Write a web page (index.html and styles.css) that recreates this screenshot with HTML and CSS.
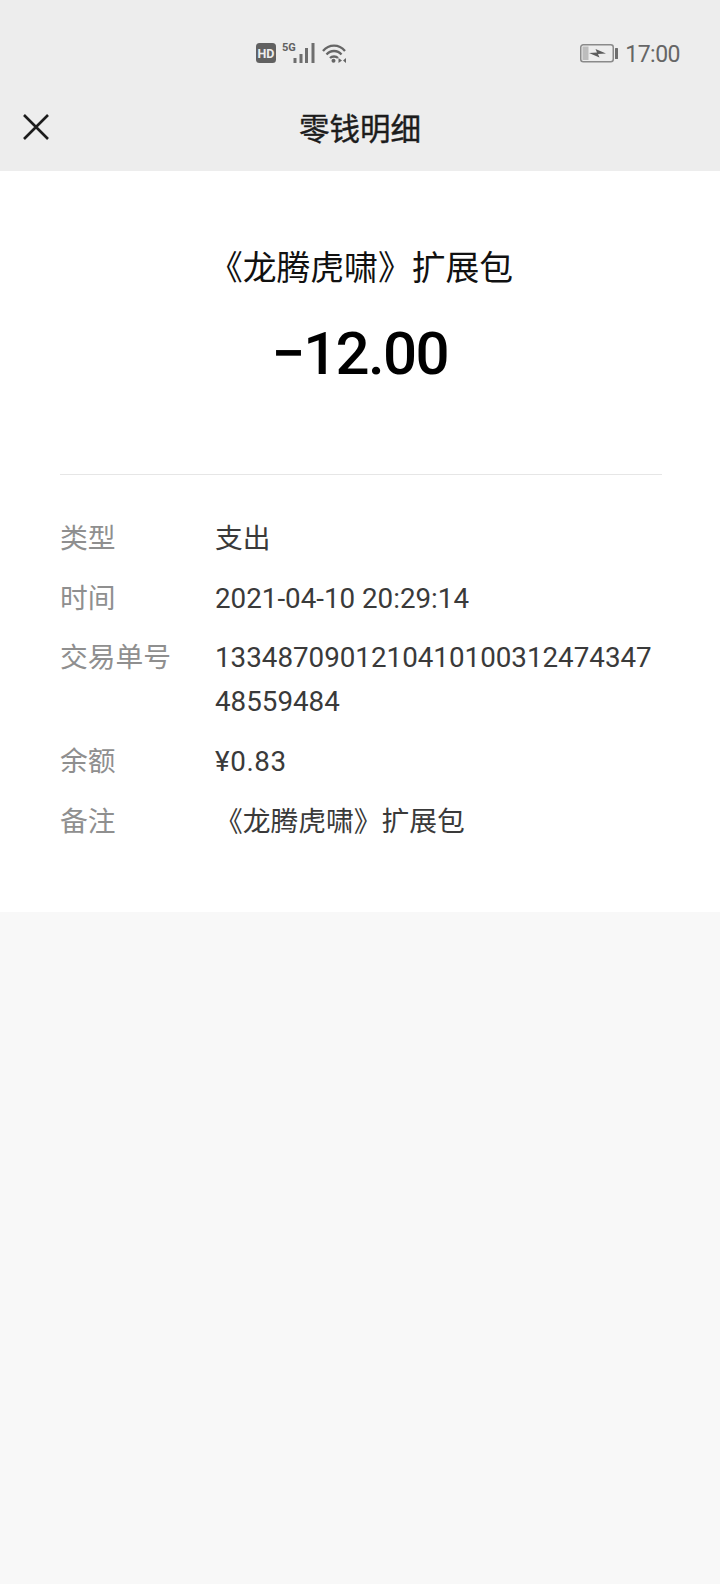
FILE: index.html
```html
<!DOCTYPE html>
<html lang="zh-CN">

<head>
  <meta charset="utf-8">
  <title>零钱明细</title>
  <link rel="stylesheet" href="styles.css">
</head>

<body>
  <header class="topbar">
    <div class="status">
      <div class="status-mid">
        <svg class="icon-hd" width="20" height="20" viewBox="0 0 20 20">
          <rect width="20" height="20" rx="3.5" fill="#616161"/>
          <text x="10" y="14.5" class="hd-text">HD</text>
        </svg>
        <span class="five-g">5G</span>
        <svg class="icon-signal" width="23" height="20" viewBox="0 0 23 20">
          <rect x="0.5" y="15" width="3" height="5" fill="#6e6e6e"/>
          <rect x="6.5" y="11" width="3" height="9" fill="#6e6e6e"/>
          <rect x="12" y="5" width="3" height="15" fill="#6e6e6e"/>
          <rect x="18.5" y="0" width="3" height="20" fill="#6e6e6e"/>
        </svg>
        <svg class="icon-wifi" width="24" height="20" viewBox="0 0 24 20" fill="none" stroke="#666666" stroke-width="2.3">
          <path d="M1 8C7 .8 17 .8 23 8"/>
          <path d="M4.5 11.5C8.5 6.8 15.5 6.8 19.5 11.5"/>
          <path d="M8 15C10 13 14 13 16 15"/>
          <circle cx="11.5" cy="17.8" r="2" fill="#666666" stroke="none"/>
          <path d="M16.5 15L20 17.5L16.5 20ZM24 15L21 17.5L24 20Z" fill="#666666" stroke="none"/>
        </svg>
      </div>
      <div class="status-right">
        <svg class="icon-battery" width="38" height="20" viewBox="0 0 38 20">
          <rect x="0.75" y="1.75" width="32.5" height="17" rx="2.5" fill="none" stroke="#8a8a8a" stroke-width="1.5"/>
          <rect x="2.5" y="3.5" width="6" height="13.5" fill="#bdbdbd"/>
          <rect x="35" y="5" width="3" height="11" rx="0.5" fill="#6e6e6e"/>
          <path d="M9 10L17 9.5L15.5 6L26 10.5L18 11L19.5 14.5Z" fill="#5c5c5c"/>
        </svg>
        <span class="clock">17:00</span>
      </div>
    </div>
    <div class="navbar">
      <svg class="icon-close" width="26" height="26" viewBox="0 0 26 26" fill="none" stroke="#1c1c1c" stroke-width="2.6">
        <path d="M1 1L25 25M25 1L1 25"/>
      </svg>
      <h1 class="navbar-title">零钱明细</h1>
    </div>
  </header>

  <main class="detail">
    <div class="summary">
      <div class="summary-name">《龙腾虎啸》扩展包</div>
      <div class="summary-amount">−12.00</div>
    </div>

    <div class="rows">
      <div class="row">
        <div class="row-label">类型</div>
        <div class="row-value">支出</div>
      </div>
      <div class="row">
        <div class="row-label">时间</div>
        <div class="row-value">2021-04-10 20:29:14</div>
      </div>
      <div class="row">
        <div class="row-label">交易单号</div>
        <div class="row-value">133487090121041010031247434748559484</div>
      </div>
      <div class="row">
        <div class="row-label">余额</div>
        <div class="row-value row-balance">¥0.83</div>
      </div>
      <div class="row">
        <div class="row-label">备注</div>
        <div class="row-value">《龙腾虎啸》扩展包</div>
      </div>
    </div>
  </main>
</body>

</html>
```

FILE: styles.css
```css
html {
  background-color: #f8f8f8;
}

body {
  margin: 0;
  font-family: Roboto, "Noto Sans CJK SC", sans-serif;
}

.topbar {
  height: 171px;
  background-color: #ededed;
}

.status {
  display: flex;
  justify-content: space-between;
  height: 90px;
  padding: 43px 40px 0 256px;
  box-sizing: border-box;
}

.status-mid {
  display: flex;
  align-items: flex-start;
  height: 20px;
}

.five-g {
  width: 12px;
  margin-left: 6px;
  margin-right: -1px;
  font-size: 11px;
  font-weight: 700;
  line-height: 10px;
  color: #616161;
}

.hd-text {
  font-family: Roboto, sans-serif;
  font-size: 12.5px;
  font-weight: 700;
  fill: #ededed;
  text-anchor: middle;
}

.icon-wifi {
  margin-left: 6px;
}

.status-right {
  display: flex;
  align-items: center;
  height: 20px;
}

.icon-battery {
  margin-right: 7px;
}

.clock {
  padding-top: 2px;
  font-size: 23px;
  letter-spacing: -0.5px;
  color: #666666;
}

.navbar {
  display: flex;
  align-items: center;
  justify-content: center;
  height: 81px;
  padding-bottom: 8px;
  box-sizing: border-box;
  position: relative;
}

.icon-close {
  position: absolute;
  left: 23px;
  top: 24px;
}

.navbar-title {
  margin: 0;
  font-size: 30.5px;
  font-weight: 400;
  -webkit-text-stroke: 0.4px #1c1c1c;
  color: #1c1c1c;
}

.detail {
  height: 741px;
  padding: 0 58px 0 60px;
  box-sizing: border-box;
  background-color: #ffffff;
}

.summary {
  height: 304px;
  padding-top: 74px;
  box-sizing: border-box;
  border-bottom: 1px solid #e6e6e6;
  text-align: center;
}

.summary-name {
  font-size: 33.8px;
  line-height: 48px;
  color: #111111;
}

.summary-amount {
  margin-top: 19px;
  padding-right: 3px;
  font-size: 60px;
  font-weight: 500;
  letter-spacing: -1.7px;
  line-height: 84px;
  color: #000000;
}

.rows {
  display: flex;
  flex-direction: column;
  gap: 15.7px;
  padding-top: 42px;
}

.row {
  display: flex;
  font-size: 27.75px;
  line-height: 44px;
}

.row-label {
  flex: 0 0 155px;
  color: #8f8f8f;
}

.row-value {
  flex: 1;
  min-width: 0;
  color: #3a3a3a;
  word-break: break-all;
}

.row-balance {
  letter-spacing: 0.6px;
}
```
